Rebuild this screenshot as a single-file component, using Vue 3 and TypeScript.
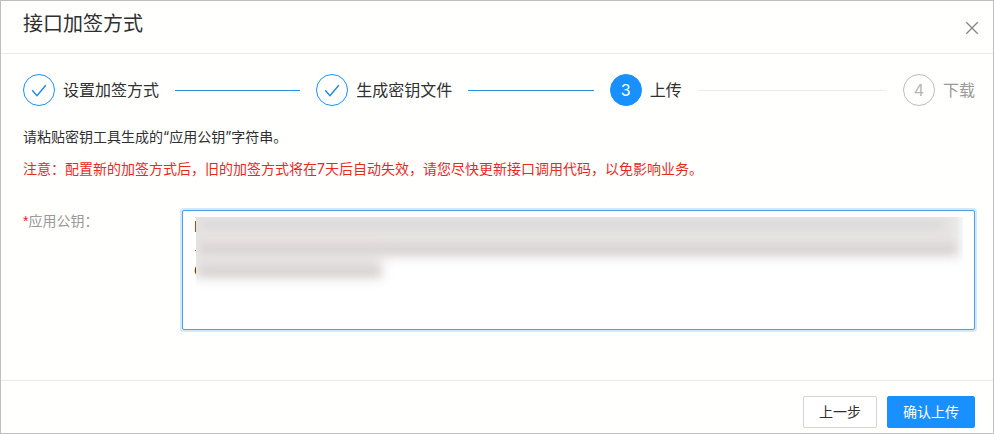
<script setup lang="ts">
import { ref } from 'vue'

type StepStatus = 'finish' | 'process' | 'wait'

interface Step {
  title: string
  status: StepStatus
}

const steps: Step[] = [
  { title: '设置加签方式', status: 'finish' },
  { title: '生成密钥文件', status: 'finish' },
  { title: '上传', status: 'process' },
  { title: '下载', status: 'wait' },
]

const publicKey = ref('M\n+\nQ')
</script>

<template>
  <section class="dialog" role="dialog" aria-labelledby="dialog-title" lang="zh-CN">
    <header class="header">
      <h1 id="dialog-title" class="title">接口加签方式</h1>
      <button class="close" type="button" aria-label="关闭">
        <svg width="14" height="14" viewBox="0 0 14 14" aria-hidden="true">
          <path d="M1.3 1.3 12.7 12.7M12.7 1.3 1.3 12.7" fill="none" stroke="currentColor" stroke-width="1.3" />
        </svg>
      </button>
    </header>

    <main class="body">
      <ol class="steps">
        <li v-for="(step, i) in steps" :key="step.title" class="step" :class="step.status">
          <span class="badge">
            <svg v-if="step.status === 'finish'" width="16" height="16" viewBox="0 0 16 16" aria-hidden="true">
              <path d="M1.2 8.2 6 13.6 14.8 3.2" fill="none" stroke="currentColor" stroke-width="1.4" />
            </svg>
            <template v-else>{{ i + 1 }}</template>
          </span>
          <span class="step-title">{{ step.title }}</span>
          <span v-if="i < steps.length - 1" class="rail"></span>
        </li>
      </ol>

      <p class="hint">请粘贴密钥工具生成的“应用公钥”字符串。</p>
      <p class="hint warn">注意：配置新的加签方式后，旧的加签方式将在7天后自动失效，请您尽快更新接口调用代码，以免影响业务。</p>

      <div class="field">
        <label class="label" for="public-key"><span class="required">*</span>应用公钥：</label>
        <div class="control">
          <textarea id="public-key" v-model="publicKey" class="textarea" spellcheck="false"></textarea>
          <div class="mask" aria-hidden="true">
            <div class="smear wide"></div>
            <div class="smear short"></div>
            <div class="streak first"></div>
            <div class="streak second"></div>
            <div class="streak third"></div>
          </div>
        </div>
      </div>
    </main>

    <footer class="footer">
      <button class="btn" type="button">上一步</button>
      <button class="btn primary" type="button">确认上传</button>
    </footer>
  </section>
</template>

<style>
body {
  margin: 0;
  background: #fff;
}
</style>

<style scoped>
.dialog {
  box-sizing: border-box;
  min-height: 100vh;
  display: flex;
  flex-direction: column;
  border: 1px solid #bfbfbf;
  background: #fffffe;
  color: #303030;
  font-family: Inter, 'Noto Sans CJK SC', sans-serif;
  font-size: 14px;
}

.header {
  display: flex;
  justify-content: space-between;
  align-items: flex-start;
  height: 52px;
  padding: 0 14px 0 22px;
  border-bottom: 1px solid #ebebeb;
}

.title {
  margin: 0;
  font-size: 20px;
  line-height: 46px;
  font-weight: 400;
}

.close {
  display: flex;
  margin-top: 20px;
  padding: 0;
  border: 0;
  background: none;
  color: #858585;
  cursor: pointer;
}

.body {
  flex: 1;
  padding: 20px 18px 48px 22px;
}

.steps {
  display: flex;
  margin: 0 0 15px;
  padding: 0;
  list-style: none;
  font-size: 16px;
}

.step {
  flex: 1;
  display: flex;
  align-items: center;
}

.step:last-child {
  flex: none;
}

.badge {
  box-sizing: border-box;
  display: flex;
  align-items: center;
  justify-content: center;
  width: 32px;
  height: 32px;
  margin-right: 8px;
  border: 1px solid #1890ff;
  border-radius: 50%;
  color: #1b87ea;
}

.step-title {
  line-height: 32px;
}

.rail {
  flex: 1;
  height: 1px;
  margin: 0 16px;
  background: #2b8fd9;
}

.process .badge {
  background: #1890ff;
  color: #fff;
}

.process .rail {
  background: #ededed;
}

.wait .badge {
  border-color: #bdbdbd;
  color: #b5b5b5;
}

.wait .step-title {
  color: #999;
}

.hint {
  margin: 0;
  line-height: 32px;
}

.warn {
  color: #e8291e;
}

.field {
  display: flex;
  margin-top: 25px;
}

.label {
  flex: none;
  width: 159px;
  line-height: 22px;
  color: #999;
}

.required {
  color: #e02318;
  font-family: 'Liberation Sans', sans-serif;
}

.control {
  position: relative;
  flex: 1;
}

.textarea {
  box-sizing: border-box;
  display: block;
  width: 100%;
  height: 120px;
  padding: 5px 11px;
  border: 1px solid #4c9fe0;
  border-radius: 2px;
  outline: 0;
  box-shadow: 0 0 0 2px #d1e9fc;
  background: #fff;
  color: #262626;
  font: inherit;
  line-height: 22px;
  resize: none;
}

/* Obscures the key, leaving only the first pixels of each line readable. */
.mask {
  position: absolute;
  top: 7px;
  left: 14px;
  right: 12px;
  height: 80px;
  overflow: hidden;
  background: #fff;
}

.smear,
.streak {
  position: absolute;
  filter: blur(6px);
}

.smear {
  background: #e7e3e3;
}

.wide {
  top: -20px;
  left: -20px;
  right: 2px;
  height: 60px;
}

.short {
  top: 30px;
  left: -6px;
  width: 192px;
  height: 32px;
}

.streak {
  height: 8px;
  left: 4px;
  filter: blur(4px);
  background: #d6d0d0;
}

.first {
  top: 4px;
  right: 20px;
  background: #d9d9d9;
}

.second {
  top: 28px;
  right: 8px;
}

.third {
  top: 50px;
  width: 180px;
}

.footer {
  display: flex;
  justify-content: flex-end;
  gap: 10px;
  padding: 15px 18px 5px;
  border-top: 1px solid #ebebeb;
}

.btn {
  height: 32px;
  padding: 0 15px;
  border: 1px solid #d4d4d4;
  border-radius: 2px;
  background: #fff;
  color: #303030;
  font: inherit;
  line-height: 30px;
  cursor: pointer;
}

.primary {
  border-color: #1890ff;
  background: #1890ff;
  color: #fff;
}
</style>
